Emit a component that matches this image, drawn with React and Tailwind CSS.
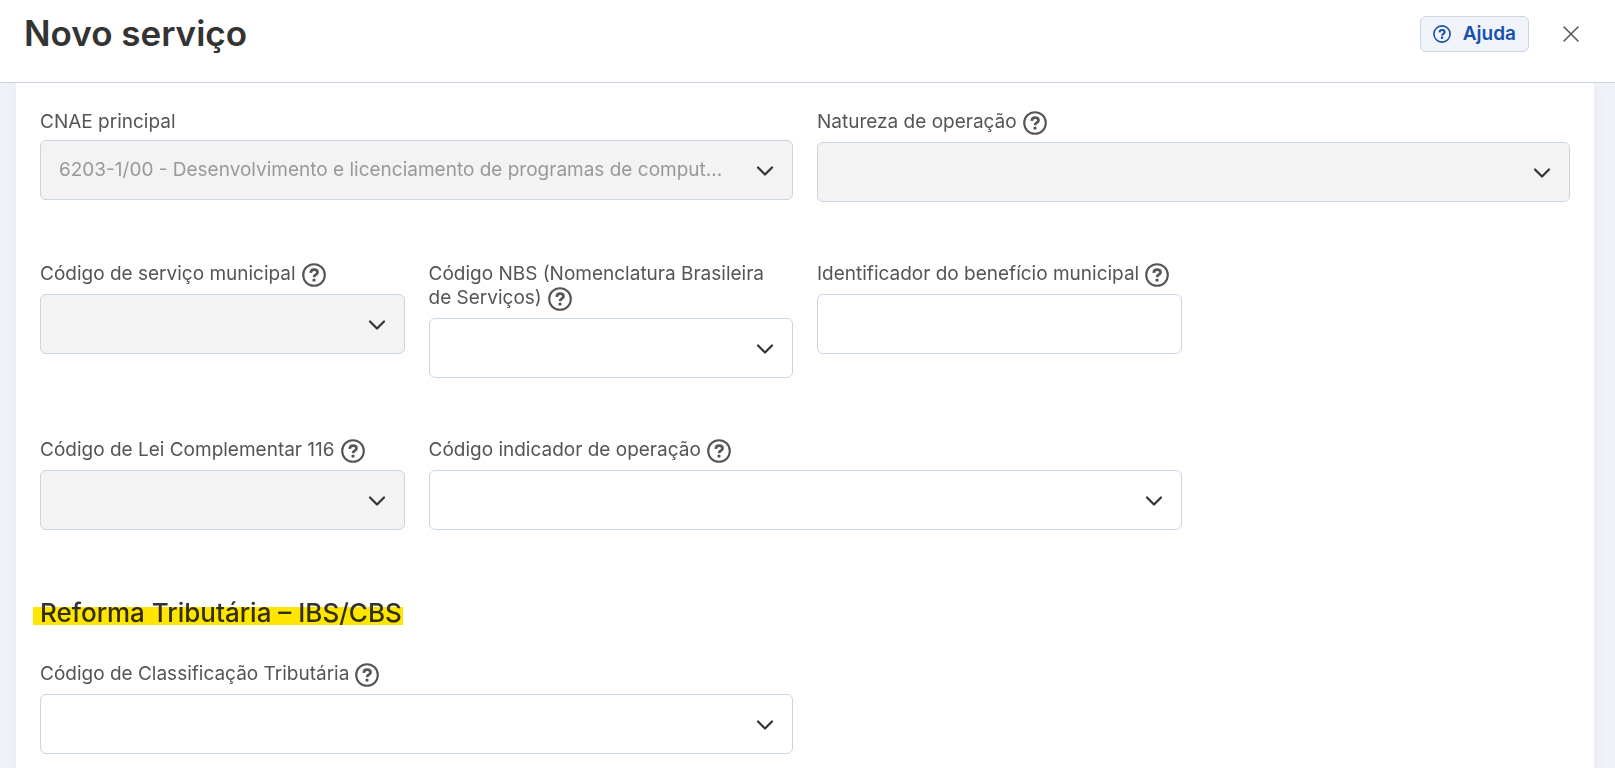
import React from 'react';

const HelpIcon = ({ className }) => (
  <svg viewBox="0 0 24 26" className={className} fill="none" stroke="currentColor" aria-hidden="true">
    <circle cx="12" cy="13" r="10.8" strokeWidth="2.1" />
    <path d="M8.7 10.8c.2-2 1.5-3.1 3.4-3.1 2.1 0 3.4 1.1 3.4 2.8 0 2.2-3.2 2.2-3.5 4.6" strokeWidth="2.7" />
    <circle cx="12" cy="18.1" r="1.7" fill="currentColor" stroke="none" />
  </svg>
);

const ChevronIcon = () => (
  <svg
    viewBox="0 0 18 12"
    className="pointer-events-none absolute right-[19px] top-[25px] h-3 w-[18px] text-[#333333]"
    fill="none"
    stroke="currentColor"
    strokeWidth="2.2"
    strokeLinecap="round"
    strokeLinejoin="round"
    aria-hidden="true"
  >
    <path d="M2 2.5l7 7 7-7" />
  </svg>
);

const FieldLabel = ({ id, label, help }) => (
  <label htmlFor={id} className="mb-1.5 block text-[19px] leading-6 text-[#555555]">
    {label}
    {help && <HelpIcon className="ml-1.5 inline-block h-[26px] w-6 align-top" />}
  </label>
);

const SelectField = ({ id, label, help, disabled, value = '', className }) => (
  <div className={className}>
    <FieldLabel id={id} label={label} help={help} />
    <div className="relative">
      <select
        id={id}
        disabled={disabled}
        defaultValue={value}
        className="block h-[60px] w-full appearance-none truncate rounded-md border border-[#c9d5e2] bg-white pl-[18px] pr-12 text-[19px] text-[#333333] opacity-100 disabled:bg-[#f3f3f3] disabled:text-[#999999]"
      >
        <option value={value}>{value}</option>
      </select>
      <ChevronIcon />
    </div>
  </div>
);

const TextField = ({ id, label, help, className }) => (
  <div className={className}>
    <FieldLabel id={id} label={label} help={help} />
    <input
      id={id}
      type="text"
      className="block h-[60px] w-full rounded-md border border-[#c9d5e2] bg-white px-[18px] text-[19px] text-[#333333]"
    />
  </div>
);

const App = () => {
  return (
    <div className="flex h-screen flex-col overflow-hidden bg-[#eff3f8] font-['Inter','Noto_Sans',sans-serif]">
      <header className="z-10 flex shrink-0 items-start justify-between border-b border-[#c9d5e2] bg-white pb-[30px] pl-6 pr-9 pt-4">
        <h1 className="text-[35px] font-semibold leading-[34px] text-[#333333]">Novo serviço</h1>
        <div className="flex items-center gap-[34px]">
          <button
            type="button"
            className="flex h-9 items-center gap-3 rounded-md border border-[#c9d5e2] bg-[#f0f4fa] px-3 text-[19px] font-semibold text-[#1650ab]"
          >
            <HelpIcon className="h-5 w-[18px]" />
            Ajuda
          </button>
          <button type="button" aria-label="Fechar" className="text-[#555555]">
            <svg viewBox="0 0 16 16" className="h-4 w-4" stroke="currentColor" strokeWidth="1.5" strokeLinecap="round">
              <path d="M1 1l14 14M15 1L1 15" />
            </svg>
          </button>
        </div>
      </header>

      <main className="ml-4 mr-[21px] grow bg-white px-6 pt-[27px] shadow-[0_0_16px_rgba(0,0,0,0.04)]">
        <div className="grid grid-cols-4 items-start gap-x-6 gap-y-[60px]">
          <SelectField
            id="cnae"
            label="CNAE principal"
            value="6203-1/00 - Desenvolvimento e licenciamento de programas de comput..."
            disabled
            className="col-span-2"
          />
          <SelectField id="natureza" label="Natureza de operação" help disabled className="col-span-2" />

          <SelectField id="servico-municipal" label="Código de serviço municipal" help disabled />
          <SelectField id="nbs" label={'Código NBS (Nomenclatura Brasileira de\u00a0Serviços)'} help />
          <TextField id="beneficio" label="Identificador do benefício municipal" help />

          <SelectField
            id="lei-complementar"
            label="Código de Lei Complementar 116"
            help
            disabled
            className="col-start-1"
          />
          <SelectField id="indicador" label="Código indicador de operação" help className="col-span-2" />
        </div>

        <h2 className="mt-[67px] text-[26px] font-medium leading-8 text-[#333333]">
          <span className="relative">
            Reforma Tributária – IBS/CBS
            {/* marca-texto */}
            <span className="absolute -left-[7px] -right-px top-[10px] h-[18px] bg-[#ffe600] mix-blend-multiply" />
          </span>
        </h2>

        <div className="mt-[33px] grid grid-cols-4 gap-x-6 pb-6">
          <SelectField
            id="classificacao"
            label="Código de Classificação Tributária"
            help
            className="col-span-2"
          />
        </div>
      </main>
    </div>
  );
};

export default App;
